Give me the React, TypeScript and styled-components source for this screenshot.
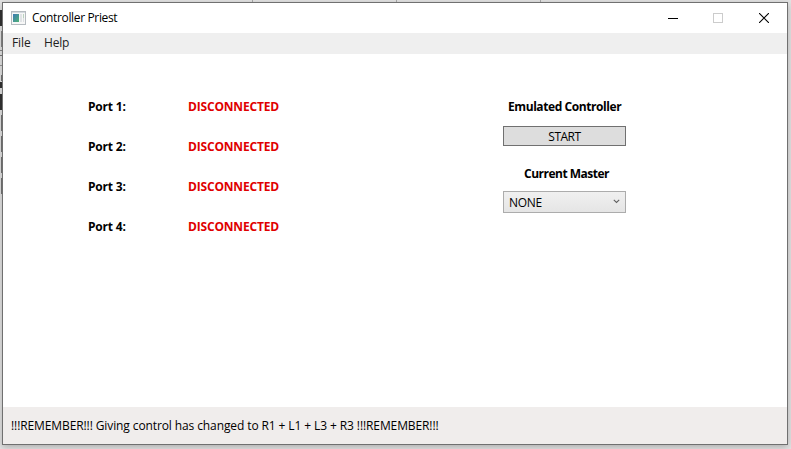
import React from "react";
import styled, { createGlobalStyle } from "styled-components";

const GlobalStyle = createGlobalStyle`
  * { box-sizing: border-box; }
  html, body { margin: 0; padding: 0; overflow: hidden; }
  body { font-family: "Open Sans", "Noto Sans", sans-serif; font-size: 12px; color: #000; }
`;

const Desktop = styled.div`
  position: relative;
  width: 791px;
  height: 449px;
  padding: 2px 3px 4px 2px;
  background: #e4e4e4;
  overflow: hidden;
`;

const BackdropMark = styled.span<{ $x: number; $y: number; $w: number; $h: number; $c: string }>`
  position: absolute;
  left: ${(p) => p.$x}px;
  top: ${(p) => p.$y}px;
  width: ${(p) => p.$w}px;
  height: ${(p) => p.$h}px;
  background: ${(p) => p.$c};
`;

const Window = styled.main`
  position: relative;
  display: flex;
  flex-direction: column;
  width: 786px;
  height: 443px;
  border: 1px solid #707070;
  background: #fff;
  box-shadow: 0 2px 7px rgba(0, 0, 0, 0.25);
`;

const TitleBar = styled.header`
  display: flex;
  align-items: center;
  height: 30px;
  flex: none;
  padding-left: 8px;
`;

const Label = styled.span<{ $w: number; $track?: number; $bold?: boolean; $color?: string }>`
  display: block;
  width: ${(p) => p.$w}px;
  line-height: 16px;
  white-space: nowrap;
  letter-spacing: ${(p) => p.$track ?? 0}px;
  font-weight: ${(p) => (p.$bold ? 700 : 400)};
  color: ${(p) => p.$color ?? "#000"};
`;

const Caption = styled.div`
  margin-left: 6px;
  flex: 1;
`;

const WindowControls = styled.div`
  display: flex;
  height: 30px;
`;

const ControlButton = styled.button<{ $w: number }>`
  display: grid;
  place-items: center;
  width: ${(p) => p.$w}px;
  height: 30px;
  padding: 0;
  border: 0;
  background: transparent;
`;

const MenuBar = styled.nav`
  display: flex;
  gap: 14px;
  height: 21px;
  flex: none;
  padding: 2px 0 0 9px;
  background: #efefef;
`;

const Content = styled.section`
  display: flex;
  height: 353px;
  flex: none;
  padding-left: 85px;
`;

const Ports = styled.div`
  display: flex;
  flex-direction: column;
  gap: 24px;
  width: 415px;
  padding-top: 45px;
`;

const PortRow = styled.div`
  display: flex;
  gap: 62px;
`;

const Panel = styled.div`
  display: flex;
  flex-direction: column;
  align-items: center;
  width: 123px;
  padding-top: 45px;
`;

const StartButton = styled.button`
  display: flex;
  justify-content: center;
  align-items: center;
  width: 123px;
  height: 20px;
  margin: 11px 0 20px;
  padding: 2px 0 0;
  border: 1px solid #707070;
  background: #ddd;
  font: inherit;
`;

const MasterSelect = styled.button`
  display: flex;
  justify-content: space-between;
  align-items: center;
  width: 123px;
  height: 22px;
  margin-top: 9px;
  padding: 2px 5px 0;
  border: 1px solid #acacac;
  background: linear-gradient(#f0f0f0, #e5e5e5);
  font: inherit;
  text-align: left;
`;

const Chevron = styled.svg`
  margin-bottom: 4px;
`;

const StatusBar = styled.footer`
  height: 37px;
  flex: none;
  padding: 11px 8px;
  background: #f0edec;
`;

const backdrop: [number, number, number, number, string][] = [
  [0, 10, 2, 16, "#333"],
  [1, 31, 1, 16, "#888"],
  [0, 50, 2, 1, "#888"],
  [0, 55, 2, 1, "#777"],
  [0, 65, 2, 1, "#999"],
  [1, 75, 1, 6, "#777"],
  [0, 82, 2, 6, "#333"],
  [0, 94, 2, 16, "#333"],
  [1, 115, 1, 16, "#777"],
  [1, 136, 1, 16, "#777"],
  [1, 157, 1, 16, "#777"],
  [1, 178, 1, 16, "#777"],
  [252, 0, 1, 2, "#aaa"],
  [396, 0, 1, 2, "#aaa"],
  [540, 0, 1, 2, "#aaa"],
];

const AppIcon = () => (
  <svg width="15" height="14" viewBox="0 0 15 14" shapeRendering="crispEdges">
    <defs>
      <linearGradient id="screen" x1="0" y1="0" x2="1" y2="1">
        <stop offset="0" stopColor="#3c79b5" />
        <stop offset="1" stopColor="#4fb276" />
      </linearGradient>
    </defs>
    <path d="M0 0H15V14H0Z" fill="#b5bbc0" />
    <path d="M1 2H14V13H1Z" fill="#f7f7f7" />
    <path d="M1 1H14V2H1Z" fill="#d5dbe0" />
    <path d="M2 3H8V11H2Z" fill="url(#screen)" />
    <path d="M9 3H11V11H9Z" fill="#e0e3e6" />
    <path d="M12 3H13V7H12Z" fill="#b9d2bf" />
    <path d="M12 7H13V11H12Z" fill="#dce0e2" />
  </svg>
);

const App = () => (
  <>
    <GlobalStyle />
    <Desktop>
      {backdrop.map(([x, y, w, h, c]) => (
        <BackdropMark key={`${x}-${y}`} $x={x} $y={y} $w={w} $h={h} $c={c} />
      ))}
      <Window>
        <TitleBar>
          <AppIcon />
          <Caption>
            <Label $w={90} $track={-0.35}>Controller Priest</Label>
          </Caption>
          <WindowControls>
            <ControlButton $w={44} aria-label="Minimize">
              <svg width="10" height="10" shapeRendering="crispEdges"><path d="M0 5h10v1H0z" fill="#000" /></svg>
            </ControlButton>
            <ControlButton $w={46} aria-label="Maximize" disabled>
              <svg width="10" height="10"><rect x=".5" y=".5" width="9" height="9" fill="none" stroke="#ccc" /></svg>
            </ControlButton>
            <ControlButton $w={46} aria-label="Close">
              <svg width="10" height="10"><path d="M0 0L10 10M10 0L0 10" stroke="#000" strokeWidth="1.1" /></svg>
            </ControlButton>
          </WindowControls>
        </TitleBar>
        <MenuBar>
          <Label $w={18} $track={-0.1} $color="#212121">File</Label>
          <Label $w={28} $track={-0.2} $color="#212121">Help</Label>
        </MenuBar>
        <Content>
          <Ports>
            {[1, 2, 3, 4].map((n) => (
              <PortRow key={n}>
                <Label $w={38} $bold $track={-0.2}>{`Port ${n}:`}</Label>
                <Label $w={92} $bold $track={-0.18} $color="#e00000">DISCONNECTED</Label>
              </PortRow>
            ))}
          </Ports>
          <Panel>
            <Label $w={113} $bold $track={-0.42}>Emulated Controller</Label>
            <StartButton>
              <Label $w={33} $track={-0.5}>START</Label>
            </StartButton>
            <Label $w={81} $bold $track={-0.5}>Current Master</Label>
            <MasterSelect>
              <Label $w={36} $track={-0.3}>NONE</Label>
              <Chevron width="7" height="5"><path d="M.8 .8L3.5 3.5L6.2 .8" fill="none" stroke="#606060" strokeWidth="1.1" /></Chevron>
            </MasterSelect>
          </Panel>
        </Content>
        <StatusBar>
          <Label $w={430} $track={-0.105}>!!!REMEMBER!!! Giving control has changed to R1 + L1 + L3 + R3 !!!REMEMBER!!!</Label>
        </StatusBar>
      </Window>
    </Desktop>
  </>
);

export default App;
